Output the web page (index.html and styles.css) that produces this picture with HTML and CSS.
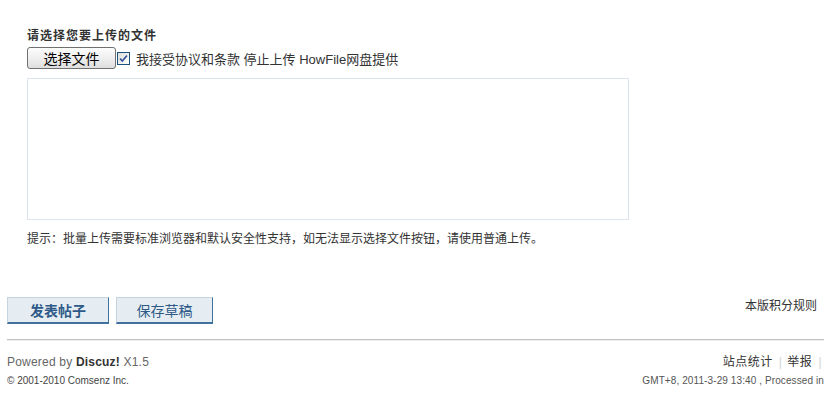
FILE: index.html
```html
<!DOCTYPE html>
<html lang="zh-CN">

<head>
    <meta charset="UTF-8">
    <meta name="viewport" content="width=device-width, initial-scale=1.0">
    <title>发表帖子</title>
    <link rel="stylesheet" href="styles.css">
</head>

<body>
    <div id="uploadBox">
        <h3 class="upload-title">请选择您要上传的文件</h3>
        <div class="pick-row">
            <button class="file-btn" type="button">选择文件</button>
            <span class="check">
                <svg width="11" height="11" viewBox="0 0 11 11">
                    <path d="M2 5.5 L4.3 8 L9 2.5" fill="none" stroke="#3a54a0" stroke-width="1.8" />
                </svg>
            </span>
            <span class="agree">我接受协议和条款 停止上传 HowFile网盘提供</span>
        </div>
        <div class="queue"></div>
        <p class="tip">提示：批量上传需要标准浏览器和默认安全性支持，如无法显示选择文件按钮，请使用普通上传。</p>
    </div>

    <div class="post-bar">
        <div class="post-btns">
            <button class="pn pn-main" type="button">发表帖子</button>
            <button class="pn" type="button">保存草稿</button>
        </div>
        <a class="rules" href="#">本版积分规则</a>
    </div>

    <div id="footer">
        <div class="ft-left">
            <p class="powered">Powered by <strong>Discuz!</strong> X1.5</p>
            <p class="copy">&copy; 2001-2010 Comsenz Inc.</p>
        </div>
        <div class="ft-right">
            <p class="ft-links"><a href="#">站点统计</a><span class="pipe">|</span><a href="#">举报</a><span class="pipe">|</span></p>
            <p class="ft-time">GMT+8, 2011-3-29 13:40 , Processed in</p>
        </div>
    </div>
</body>

</html>
```

FILE: styles.css
```css
body {
    margin: 0;
    font-family: 'Liberation Sans', 'Noto Sans CJK SC', sans-serif;
    font-size: 12px;
    color: #333;
    background: #fff;
    overflow: hidden;
}

p {
    margin: 0;
}

a {
    color: #333;
    text-decoration: none;
}

/* upload area */
#uploadBox {
    padding: 28px 0 0 27px;
}

.upload-title {
    margin: 0;
    font-size: 12px;
    line-height: 16px;
    font-weight: bold;
    letter-spacing: 1px;
}

.pick-row {
    display: flex;
    align-items: center;
    margin-top: 3px;
    height: 22px;
}

.file-btn {
    width: 89px;
    height: 22px;
    padding: 0;
    border: 1px solid #707070;
    border-radius: 3px;
    background: linear-gradient(#fdfdfd, #ececec 60%, #dedede);
    font-family: 'Noto Sans CJK SC', sans-serif;
    font-size: 14px;
    line-height: 18px;
    color: #000;
}

.check {
    display: flex;
    align-items: center;
    justify-content: center;
    box-sizing: border-box;
    width: 13px;
    height: 13px;
    margin-left: 1px;
    border: 1px solid #1c5180;
    background: linear-gradient(135deg, #dcdcd7, #fff);
}

.agree {
    margin-left: 6px;
    font-size: 13px;
    color: #333;
}

.queue {
    box-sizing: border-box;
    width: 602px;
    height: 142px;
    margin-top: 9px;
    border: 1px solid #dde3ee;
}

.tip {
    margin-top: 10px;
    line-height: 18px;
}

/* submit buttons */
.post-bar {
    display: flex;
    justify-content: space-between;
    align-items: flex-start;
    margin-top: 49px;
    padding: 0 7px 0 7px;
}

.post-btns {
    display: flex;
    gap: 7px;
}

.pn {
    box-sizing: border-box;
    width: 97px;
    height: 27px;
    padding: 0;
    border: 1px solid #c6d4e0;
    border-right-color: #40709f;
    border-bottom: 2px solid #40709f;
    background: #e5edf2;
    font-family: 'Noto Sans CJK SC', sans-serif;
    font-size: 14px;
    line-height: 22px;
    color: #2f5a88;
}

.pn-main {
    width: 102px;
    font-weight: bold;
}

.rules {
    margin-top: 1px;
    line-height: 16px;
}

/* footer */
#footer {
    display: flex;
    justify-content: space-between;
    margin: 15px 0 0 7px;
    padding-top: 13px;
    border-top: 1px solid #c2c2c2;
    box-shadow: inset 0 1px 0 #ececec;
}

.powered {
    color: #666;
    line-height: 18px;
    letter-spacing: 0.2px;
}

.powered strong {
    color: #333;
}

.copy {
    margin-top: 3px;
    font-size: 10px;
    line-height: 14px;
    color: #444;
}

.ft-right {
    text-align: right;
}

.ft-links {
    line-height: 18px;
    letter-spacing: 0.5px;
}

.pipe {
    margin: 0 5px 0 6px;
    color: #d4d4d4;
}

.ft-links .pipe:last-child {
    margin-right: 2px;
}

.ft-time {
    margin-top: 3px;
    font-size: 10px;
    line-height: 14px;
    color: #555;
    letter-spacing: 0.1px;
}
```
